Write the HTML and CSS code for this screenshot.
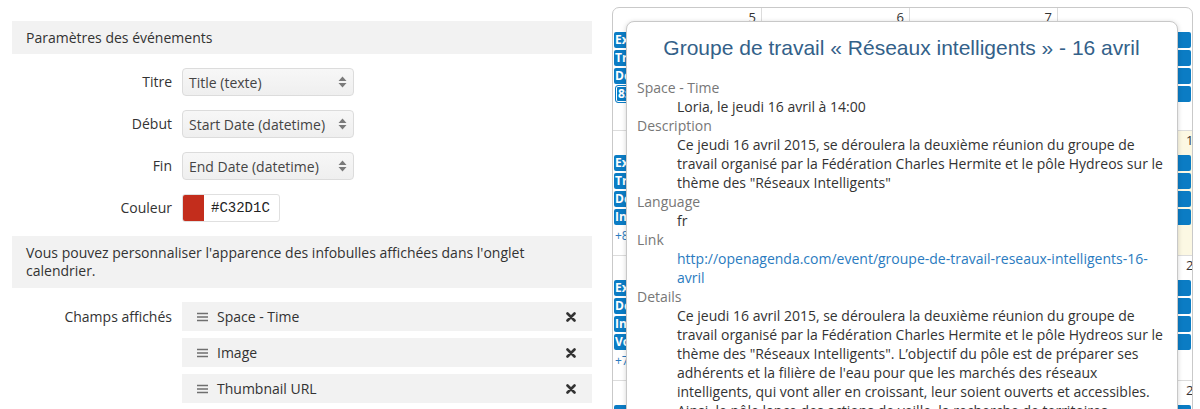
FILE: index.html
```html
<!DOCTYPE html>
<html lang="fr">
<head>
<meta charset="utf-8">
<title>Paramètres des événements</title>
<link rel="stylesheet" href="styles.css">
</head>
<body>
<div class="page">
  <section class="settings">
    <div class="section-head">Paramètres des événements</div>
    <div class="form">
      <div class="form-row">
        <label class="form-label">Titre</label>
        <div class="select"><span>Title (texte)</span>
          <svg class="sel-arrows" width="9" height="12" viewBox="0 0 9 12"><path d="M4.5 0.5 L8.5 5 H0.5 Z M4.5 11.5 L8.5 7 H0.5 Z" fill="#7a7a7a"/></svg>
        </div>
      </div>
      <div class="form-row">
        <label class="form-label">Début</label>
        <div class="select"><span>Start Date (datetime)</span>
          <svg class="sel-arrows" width="9" height="12" viewBox="0 0 9 12"><path d="M4.5 0.5 L8.5 5 H0.5 Z M4.5 11.5 L8.5 7 H0.5 Z" fill="#7a7a7a"/></svg>
        </div>
      </div>
      <div class="form-row">
        <label class="form-label">Fin</label>
        <div class="select"><span>End Date (datetime)</span>
          <svg class="sel-arrows" width="9" height="12" viewBox="0 0 9 12"><path d="M4.5 0.5 L8.5 5 H0.5 Z M4.5 11.5 L8.5 7 H0.5 Z" fill="#7a7a7a"/></svg>
        </div>
      </div>
      <div class="form-row">
        <label class="form-label">Couleur</label>
        <div class="color-input"><span class="swatch"></span><span class="color-code">#C32D1C</span></div>
      </div>
      <div class="info">Vous pouvez personnaliser l'apparence des infobulles affichées dans l'onglet calendrier.</div>
      <div class="form-row fields-row">
        <label class="form-label">Champs affichés</label>
        <ul class="field-list">
          <li class="field-item">
            <svg class="grip" width="11" height="10" viewBox="0 0 11 10"><path d="M0 1.5H11M0 5H11M0 8.5H11" stroke="#6f6f6f" stroke-width="1.6"/></svg>
            <span class="field-name">Space - Time</span>
            <svg class="remove" width="10" height="10" viewBox="0 0 10 10"><path d="M1.5 1.5L8.5 8.5M8.5 1.5L1.5 8.5" stroke="#333" stroke-width="2.6" stroke-linecap="round"/></svg>
          </li>
          <li class="field-item">
            <svg class="grip" width="11" height="10" viewBox="0 0 11 10"><path d="M0 1.5H11M0 5H11M0 8.5H11" stroke="#6f6f6f" stroke-width="1.6"/></svg>
            <span class="field-name">Image</span>
            <svg class="remove" width="10" height="10" viewBox="0 0 10 10"><path d="M1.5 1.5L8.5 8.5M8.5 1.5L1.5 8.5" stroke="#333" stroke-width="2.6" stroke-linecap="round"/></svg>
          </li>
          <li class="field-item">
            <svg class="grip" width="11" height="10" viewBox="0 0 11 10"><path d="M0 1.5H11M0 5H11M0 8.5H11" stroke="#6f6f6f" stroke-width="1.6"/></svg>
            <span class="field-name">Thumbnail URL</span>
            <svg class="remove" width="10" height="10" viewBox="0 0 10 10"><path d="M1.5 1.5L8.5 8.5M8.5 1.5L1.5 8.5" stroke="#333" stroke-width="2.6" stroke-linecap="round"/></svg>
          </li>
        </ul>
      </div>
    </div>
  </section>

  <section class="calendar-wrap">
    <div class="calendar">
      <div class="week first">
        <div class="day">
          <div class="day-num">5</div>
          <div class="event">Ex</div>
          <div class="event">Tr</div>
          <div class="event">Dé</div>
          <div class="event selected">8:</div>
        </div>
        <div class="day"><div class="day-num">6</div></div>
        <div class="day"><div class="day-num">7</div></div>
        <div class="day">
          <div class="day-num"></div>
          <div class="event"></div>
          <div class="event"></div>
          <div class="event"></div>
          <div class="event"></div>
        </div>
      </div>
      <div class="week">
        <div class="day">
          <div class="day-num"></div>
          <div class="event">Ex</div>
          <div class="event">Tr</div>
          <div class="event">Dé</div>
          <div class="event">Ins</div>
          <div class="more">+8</div>
        </div>
        <div class="day"></div>
        <div class="day"></div>
        <div class="day today">
          <div class="day-num">1</div>
          <div class="event"></div>
          <div class="event"></div>
          <div class="event"></div>
          <div class="event"></div>
        </div>
      </div>
      <div class="week">
        <div class="day">
          <div class="day-num"></div>
          <div class="event">Ex</div>
          <div class="event">Dé</div>
          <div class="event">Ins</div>
          <div class="event">Vo</div>
          <div class="more">+7</div>
        </div>
        <div class="day"></div>
        <div class="day"></div>
        <div class="day">
          <div class="day-num">2</div>
          <div class="event"></div>
          <div class="event"></div>
          <div class="event"></div>
          <div class="event"></div>
        </div>
      </div>
      <div class="week">
        <div class="day"><div class="day-num"></div><div class="event"></div></div>
        <div class="day"></div>
        <div class="day"></div>
        <div class="day"><div class="day-num">2</div><div class="event"></div></div>
      </div>
    </div>

    <div class="popup">
      <h2 class="popup-title">Groupe de travail « Réseaux intelligents » - 16 avril</h2>
      <dl class="popup-fields">
        <dt>Space - Time</dt>
        <dd>Loria, le jeudi 16 avril à 14:00</dd>
        <dt>Description</dt>
        <dd>Ce jeudi 16 avril 2015, se déroulera la deuxième réunion du groupe de travail organisé par la Fédération Charles Hermite et le pôle Hydreos sur le thème des "Réseaux Intelligents"</dd>
        <dt>Language</dt>
        <dd>fr</dd>
        <dt>Link</dt>
        <dd><a class="link" href="#">http://openagenda.com/event/groupe-de-travail-reseaux-intelligents-16-avril</a></dd>
        <dt>Details</dt>
        <dd>Ce jeudi 16 avril 2015, se déroulera la deuxième réunion du groupe de travail organisé par la Fédération Charles Hermite et le pôle Hydreos sur le thème des "Réseaux Intelligents". L’objectif du pôle est de préparer ses adhérents et la filière de l'eau pour que les marchés des réseaux intelligents, qui vont aller en croissant, leur soient ouverts et accessibles. Ainsi, le pôle lance des actions de veille, la recherche de territoires</dd>
      </dl>
    </div>
  </section>
</div>
</body>
</html>
```

FILE: styles.css
```css
* { box-sizing: border-box; }

html, body {
  margin: 0;
  padding: 0;
  background: #fff;
  height: 409px;
  overflow: hidden;
}

body {
  font-family: "Open Sans", "Noto Sans", sans-serif;
  font-size: 14px;
  color: #333;
}

.page {
  display: flex;
  gap: 20px;
  padding-left: 12px;
}

/* ---------- settings column ---------- */
.settings {
  width: 580px;
  flex: none;
  padding-top: 21px;
}

.section-head {
  height: 33px;
  line-height: 33px;
  padding: 0 14px;
  background: #f2f2f2;
}

.form {
  display: flex;
  flex-direction: column;
  gap: 14px;
  padding-top: 14px;
}

.form-row {
  display: flex;
  align-items: center;
  gap: 10px;
}

.form-label {
  width: 160px;
  flex: none;
  text-align: right;
  line-height: 28px;
}

.select {
  width: 172px;
  height: 28px;
  border: 1px solid #dcdcdc;
  border-radius: 4px;
  background: linear-gradient(#f7f7f7, #efefef);
  display: flex;
  align-items: center;
  justify-content: space-between;
  padding: 0 6px 0 6px;
  color: #444;
}

.sel-arrows { flex: none; }

.color-input {
  width: 98px;
  height: 28px;
  border: 1px solid #e0e0e0;
  border-radius: 3px;
  display: flex;
  align-items: stretch;
  overflow: hidden;
}

.swatch {
  width: 21px;
  background: #c32d1c;
}

.color-code {
  font-family: "Liberation Mono", "DejaVu Sans Mono", monospace;
  font-size: 14px;
  line-height: 26px;
  padding-left: 7px;
  color: #222;
}

.info {
  background: #f2f2f2;
  padding: 8px 14px;
  line-height: 18px;
}

.fields-row { align-items: flex-start; }

.fields-row .form-label { line-height: 29px; }

.field-list {
  list-style: none;
  margin: 0;
  padding: 0;
  flex: 1;
  display: flex;
  flex-direction: column;
  gap: 7px;
}

.field-item {
  height: 29px;
  background: #f2f2f2;
  display: flex;
  align-items: center;
  padding: 0 16px 0 15px;
}

.grip { flex: none; margin-right: 9px; }

.field-name { flex: 1; }

.remove { flex: none; }

/* ---------- calendar ---------- */
.calendar-wrap {
  position: relative;
  width: 581px;
  flex: none;
  padding-top: 7px;
}

.calendar {
  border: 1px solid #c9c9c9;
  border-radius: 7px 7px 0 0;
  overflow: hidden;
  height: 420px;
  font-size: 12px;
}

.week {
  display: grid;
  grid-template-columns: 149px 148px 148px 134px;
  height: 125px;
  border-bottom: 1px solid #dcdcdc;
}

.week.first { height: 123px; }

.day {
  border-right: 1px solid #dcdcdc;
  overflow: hidden;
}

.day:last-child { border-right: none; }

.day.today { background: #fcf8e3; }

.day-num {
  height: 24px;
  line-height: 18px;
  text-align: right;
  padding-right: 5px;
  font-size: 13px;
  color: #333;
}

.day:last-child .day-num {
  text-align: left;
  padding-left: 128px;
  padding-right: 0;
}

.event {
  height: 16px;
  margin: 0 1px 2px 1px;
  background: #0b7cc4;
  color: #fff;
  font-weight: 700;
  font-size: 12px;
  line-height: 16px;
  padding-left: 1px;
  white-space: nowrap;
  overflow: hidden;
  border-radius: 2px;
}

.event.selected {
  margin-left: 3px;
  box-shadow: inset 0 0 0 1px #fff;
  outline: 1px solid #0b7cc4;
  padding-left: 2px;
}

.more {
  color: #2a7bc0;
  font-size: 12px;
  line-height: 18px;
  padding-left: 2px;
}

/* ---------- tooltip popup ---------- */
.popup {
  position: absolute;
  left: 14px;
  top: 21px;
  width: 552px;
  height: 420px;
  background: #fff;
  border: 1px solid #c8c8c8;
  border-radius: 8px;
  box-shadow: 0 1px 5px rgba(0, 0, 0, 0.18);
  padding: 14px 11px 0 10px;
}

.popup-title {
  margin: 0;
  text-align: center;
  font-family: "Liberation Sans", Arial, sans-serif;
  font-weight: 400;
  font-size: 21px;
  line-height: 24px;
  color: #336189;
}

.popup-fields {
  margin: 18px 0 0 0;
  line-height: 19px;
}

.popup-fields dt {
  color: #777;
}

.popup-fields dd {
  margin: 0 0 0 40px;
  color: #333;
}

.link {
  color: #2a7bc0;
  text-decoration: none;
}
```
